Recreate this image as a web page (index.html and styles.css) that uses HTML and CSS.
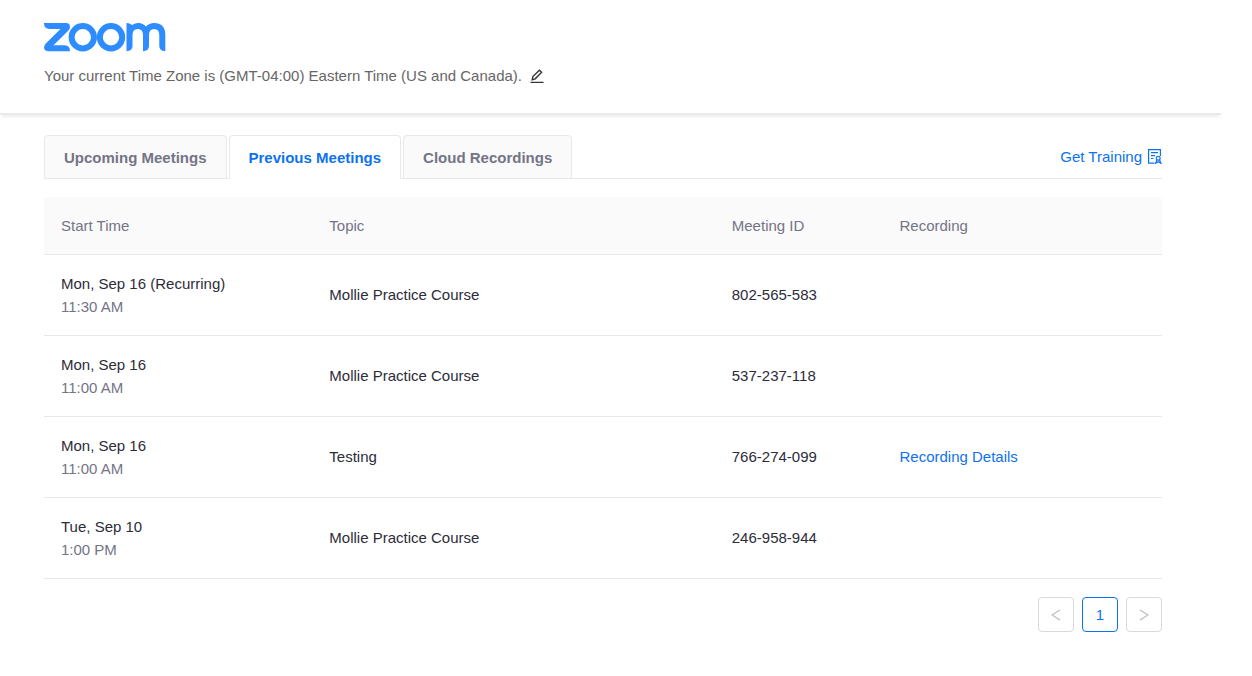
FILE: index.html
```html
<!DOCTYPE html>
<html lang="en">
<head>
<meta charset="utf-8">
<title>Zoom Meetings</title>
<link rel="stylesheet" href="styles.css">
</head>
<body>
<header class="header">
  <svg class="logo" viewBox="0 0 122 29" role="img" aria-label="zoom">
    <path fill="#2d8cff" d="M0 0H22Q26 0 26 4Q26 6 24 8L9.500 22.300H20.500Q26 22.500 26 28.300H5Q0 28.300 0 24.300Q0 22.300 2 20.300L16.500 6H5.500Q0 5.800 0 0Z"/>
    <g fill="none" stroke="#2d8cff" stroke-width="6">
      <circle cx="38.800" cy="14.200" r="11.200"/>
      <circle cx="67" cy="14.200" r="11.200"/>
    </g>
    <path fill="#2d8cff" d="M82.500 0Q86 0 88 2Q91 0 94.500 0Q99 0 102 3.500Q105 0 110 0Q121.300 0 121.300 12V28.300Q115.300 27.800 115.300 23V12Q115.300 6 110.200 6Q105 6 105 12V23Q105 27.800 99 28.300V12Q99 6 93.800 6Q88.500 6 88.500 12V23Q88.500 27.800 82.500 28.300Z"/>
  </svg>
  <div class="zone">
    <span>Your current Time Zone is (GMT-04:00) Eastern Time (US and Canada).</span>
    <button class="edit" type="button" aria-label="Edit time zone">
      <svg viewBox="0 0 14 14" width="14" height="14" fill="none" stroke="#333" stroke-width="1.300"><path d="M.5 13.300H13.500M2.200 10.700L2.900 7.600L9.400 1.200L11.700 3.300L5.200 9.800Z"/></svg>
    </button>
  </div>
</header>
<main class="main">
  <div class="bar">
    <nav class="tabs">
      <button class="tab" type="button">Upcoming Meetings</button>
      <button class="tab active" type="button">Previous Meetings</button>
      <button class="tab" type="button">Cloud Recordings</button>
    </nav>
    <a class="training" href="#">Get Training
      <svg viewBox="0 0 14 15" width="14" height="15" fill="none" stroke="#0e72ed" stroke-width="1.200"><path d="M6.500 14.200H.6V.6H12.400V7M3 3.600H10M3 6.600H7M3 9.500H5.500"/><circle cx="10.200" cy="9.200" r="1.900"/><path d="M9 10.800L7.700 14.300L10.200 12.800L12.900 14.300L11.500 10.800"/></svg>
    </a>
  </div>
  <table class="meetings">
    <thead>
      <tr><th class="time">Start Time</th><th class="topic">Topic</th><th class="id">Meeting ID</th><th>Recording</th></tr>
    </thead>
    <tbody>
      <tr><td>Mon, Sep 16 (Recurring)<div class="hour">11:30 AM</div></td><td>Mollie Practice Course</td><td>802-565-583</td><td></td></tr>
      <tr><td>Mon, Sep 16<div class="hour">11:00 AM</div></td><td>Mollie Practice Course</td><td>537-237-118</td><td></td></tr>
      <tr><td>Mon, Sep 16<div class="hour">11:00 AM</div></td><td>Testing</td><td>766-274-099</td><td><a href="#">Recording Details</a></td></tr>
      <tr><td>Tue, Sep 10<div class="hour">1:00 PM</div></td><td>Mollie Practice Course</td><td>246-958-944</td><td></td></tr>
    </tbody>
  </table>
  <nav class="pages" aria-label="Pages">
    <button class="page" type="button" aria-label="Previous page" disabled><svg viewBox="0 0 10 12" width="10" height="12" fill="none" stroke="#bbb" stroke-width="1.200"><path d="M9 1L1 6L9 11"/></svg></button>
    <button class="page current" type="button">1</button>
    <button class="page" type="button" aria-label="Next page" disabled><svg viewBox="0 0 10 12" width="10" height="12" fill="none" stroke="#bbb" stroke-width="1.200"><path d="M1 1L9 6L1 11"/></svg></button>
  </nav>
</main>
</body>
</html>
```
FILE: styles.css
```css
* { box-sizing: border-box; }
body {
  margin: 0;
  background: #fff;
  color: #2c2c3a;
  font: 15px/23px "Liberation Sans", Arial, sans-serif;
}
button { font: inherit; cursor: pointer; }
a { color: #0e72ed; text-decoration: none; }
.header {
  margin-right: 31px;
  padding: 23px 44px 26px;
  border-bottom: 2px solid #e9e9e9;
  box-shadow: 0 4px 3px -2px #eee;
}
.logo { display: block; width: 122px; height: 29px; }
.zone {
  display: flex;
  align-items: center;
  gap: 8px;
  margin-top: 12px;
  color: #666;
}
.edit { display: flex; padding: 0; border: 0; background: none; }
.main { padding: 20px 90px 44px 44px; }
.bar {
  display: flex;
  justify-content: space-between;
  align-items: center;
  border-bottom: 1px solid #e8e8e8;
}
.tabs { display: flex; gap: 2px; margin-bottom: -1px; }
.tab {
  height: 44px;
  padding: 0 19px;
  border: 1px solid #e8e8e8;
  border-radius: 4px 4px 0 0;
  background: #fafafa;
  color: #747487;
  font-weight: bold;
}
.tab.active { border-bottom-color: #fff; background: #fff; color: #0e72ed; }
.training { display: flex; align-items: center; gap: 6px; }
.meetings {
  width: 100%;
  margin-top: 18px;
  border-collapse: separate;
  border-spacing: 0;
  table-layout: fixed;
}
.meetings th, .meetings td {
  padding: 17px;
  border-bottom: 1px solid #e8e8e8;
  text-align: left;
}
.meetings td + td { padding: 16px 17px 18px; }
.meetings th { background: #fafafa; color: #747487; font-weight: normal; }
.meetings th:first-child { border-top-left-radius: 4px; }
.meetings th:last-child { border-top-right-radius: 4px; }
.time { width: 24%; }
.topic { width: 36%; }
.id { width: 15%; }
.hour { color: #747487; }
.pages { display: flex; justify-content: flex-end; gap: 8px; margin-top: 18px; }
.page {
  display: flex;
  align-items: center;
  justify-content: center;
  width: 36px;
  height: 35px;
  padding: 0;
  border: 1px solid #d9d9d9;
  border-radius: 4px;
  background: #fff;
}
.page.current { border-color: #0e72ed; color: #0e72ed; }
```
